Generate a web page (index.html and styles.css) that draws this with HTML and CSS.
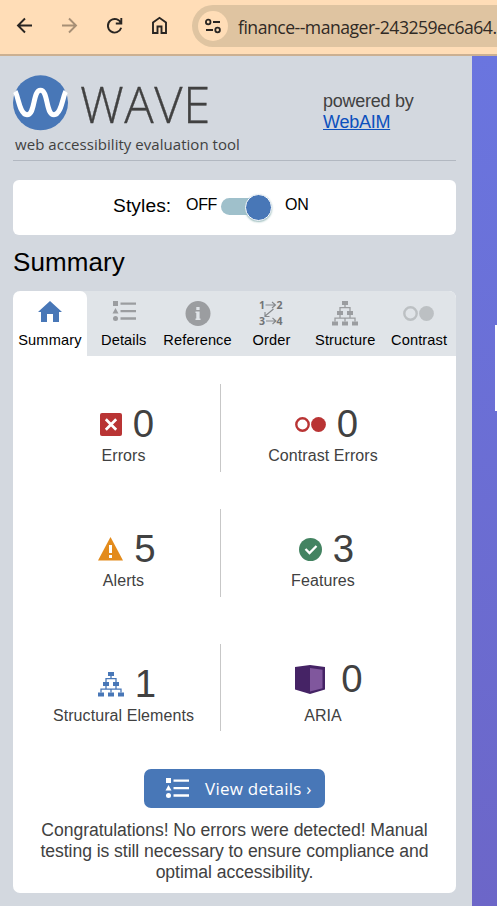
FILE: index.html
```html
<!DOCTYPE html>
<html lang="en">
<head>
<meta charset="utf-8">
<title>WAVE web accessibility evaluation tool</title>
<link rel="stylesheet" href="styles.css">
</head>
<body>
<svg width="0" height="0" class="defs">
  <defs>
    <symbol id="list" viewBox="0 0 24 20">
      <path fill="currentColor" d="M1 0h5v5H1zM3.500 7l3 5.500h-6z"/>
      <circle fill="currentColor" cx="3.500" cy="17.500" r="2.500"/>
      <path stroke="currentColor" stroke-width="2.400" d="M8.500 2.600H24M8.500 10.100H24M8.500 17.500H24"/>
    </symbol>
    <symbol id="tree" viewBox="0 0 26 25">
      <path fill="currentColor" d="M10 0h6v4h-6zM5 10h6v4H5zM15 10h6v4h-6zM0 20.500h6v4H0zM10 20.500h6v4h-6zM20 20.500h6v4h-6z"/>
      <path fill="none" stroke="currentColor" stroke-width="1.300" d="M13 4v3M8 10V6.700h10V10M8 14v3M18 14v3M3 20.500v-3.300h20v3.300M13 17v3.500"/>
    </symbol>
    <symbol id="contrast" viewBox="0 0 31 15">
      <circle fill="none" stroke="currentColor" stroke-width="2.400" cx="7.500" cy="7.500" r="6.200"/>
      <circle fill="currentColor" cx="23.500" cy="7.500" r="7.400"/>
    </symbol>
  </defs>
</svg>
<header class="toolbar">
  <svg class="nav-icons" width="176" height="54" fill="none" stroke="#292522" stroke-width="1.900">
    <path d="M32 25.500H18M25 18.500l-7 7 7 7"/>
    <path stroke="#a78f75" d="M62 25.500h14M69 18.500l7 7-7 7"/>
    <path d="M121 23.200a6.800 6.800 0 1 0 .2 4.600M121.300 18v5.500h-5.500"/>
    <path d="M153 33V22.500l6.500-4.700 6.500 4.700V33h-4.500v-6.500h-4V33z"/>
  </svg>
  <div class="address">
    <span class="site-settings">
      <svg width="18" height="16" fill="none" stroke="#292522" stroke-width="1.800">
        <circle cx="4.200" cy="4" r="2.300"/><path d="M9 4h7M2 12h7"/><circle cx="13.600" cy="12" r="2.300"/>
      </svg>
    </span>
    <span class="url">finance--manager-243259ec6a64.</span>
  </div>
</header>
<div class="workspace">
  <main class="sidebar">
    <div class="brand">
      <div class="identity">
        <div class="logo">
          <svg width="56" height="56" viewBox="0 0 56 56">
            <circle cx="27.500" cy="27.800" r="27.500" fill="#4877b7"/>
            <path d="M2.200 16.500C5 20 6.500 39.800 14 39.800c8.500 0 5.500-24.500 13.500-24.500s5 24.500 13.500 24.500c7.500 0 9-19.800 11.800-23.300" fill="none" stroke="#fff" stroke-width="5"/>
          </svg>
          <span class="wordmark">WAVE</span>
        </div>
        <div class="tagline">web accessibility evaluation tool</div>
      </div>
      <div class="powered">powered by<br><a href="#">WebAIM</a></div>
    </div>
    <section class="styles-switch">
      <span class="styles-label">Styles:</span>
      <span class="off">OFF</span>
      <span class="track"><span class="knob"></span></span>
      <span class="on">ON</span>
    </section>
    <h1>Summary</h1>
    <section class="panel">
      <nav class="tabs">
        <div class="tab active"><svg width="24" height="21" viewBox="0 0 24 21"><path fill="#4877b7" d="M12 0l12 11h-3v10h-6v-8H9v8H3V11H0z"/></svg><span>Summary</span></div>
        <div class="tab"><svg class="gray" width="24" height="20"><use href="#list"/></svg><span>Details</span></div>
        <div class="tab"><svg width="26" height="25" viewBox="0 0 26 25"><circle cx="13" cy="12.500" r="12.500" fill="#9b9da0"/><path fill="#e0e4e8" d="M11.300 6h3.300v3h-3.300zM10.500 10.500h4.100V17.500H15.500V19h-5v-1.500h.8V12h-.8z"/></svg><span>Reference</span></div>
        <div class="tab"><svg class="order" width="26" height="26"><text x="1" y="9">1</text><text x="18.500" y="9">2</text><text x="1" y="25">3</text><text x="18.500" y="25">4</text><path d="M7.500 5h10M14 2l3.500 3-3.500 3M8 21h10M14.500 18l3.500 3-3.500 3M15.500 9l-9 7.500M7 12v4.500h4.500"/></svg><span>Order</span></div>
        <div class="tab"><svg class="gray" width="26" height="25"><use href="#tree"/></svg><span>Structure</span></div>
        <div class="tab"><svg class="pale contrast-tab" width="31" height="15"><use href="#contrast"/></svg><span>Contrast</span></div>
      </nav>
      <div class="counts">
        <div class="count left"><div class="figure"><svg width="22" height="23"><rect width="22" height="23" rx="2" fill="#b93434"/><path d="M5.800 6.200l10.400 10.600M16.200 6.200L5.800 16.800" stroke="#fff" stroke-width="2.700"/></svg><b>0</b></div><span>Errors</span></div>
        <div class="count"><div class="figure"><svg class="red" width="31" height="15"><use href="#contrast"/></svg><b>0</b></div><span>Contrast Errors</span></div>
        <div class="count left"><div class="figure"><svg width="25" height="24"><path fill="#e38b1c" d="M12.500 0L25 23.500H0z"/><path fill="#fff" d="M11 8h3v8h-3zM11 18h3v3h-3z"/></svg><b>5</b></div><span>Alerts</span></div>
        <div class="count"><div class="figure"><svg width="23" height="23"><circle cx="11.500" cy="11.500" r="11.500" fill="#438361"/><path d="M6.500 11l4 4 7-7" fill="none" stroke="#fff" stroke-width="2.300"/></svg><b>3</b></div><span>Features</span></div>
        <div class="count left"><div class="figure"><svg class="blue" width="26" height="25"><use href="#tree"/></svg><b>1</b></div><span>Structural Elements</span></div>
        <div class="count aria"><div class="figure"><svg width="30" height="29"><path fill="#452365" d="M0 2L15 0l15 2v22.500L15 29 0 24.500z"/><path fill="#80579d" d="M15 3l12.500 1.800v18.500L15 26.500z"/></svg><b>0</b></div><span>ARIA</span></div>
      </div>
      <button class="details"><svg width="24" height="20"><use href="#list"/></svg><span>View details ›</span></button>
      <p>Congratulations! No errors were detected! Manual<br>testing is still necessary to ensure compliance and<br>optimal accessibility.</p>
    </section>
  </main>
  <aside class="page"><div class="page-card"></div></aside>
</div>
</body>
</html>
```

FILE: styles.css
```css
* { box-sizing: border-box; }
body { margin: 0; width: 497px; height: 906px; overflow: hidden; background: #d3d8df; color: #414141; font-family: "Liberation Sans", Arial, sans-serif; }
svg { display: block; flex: none; }
.defs { position: absolute; }
.toolbar { height: 56px; background: #ffddb7; border-bottom: 2px solid #cbb092; display: flex; overflow: hidden; }
.nav-icons { margin-right: 16px; }
.address { flex: none; width: 305px; height: 42px; margin-top: 5px; padding-left: 6px; border-radius: 21px 0 0 21px; background: #dfc4a1; display: flex; align-items: center; }
.site-settings { flex: none; width: 30px; height: 30px; border-radius: 50%; background: #ffddb7; display: flex; align-items: center; justify-content: center; }
.url { margin: 1px 0 0 10px; color: #302a25; font: 17.600px "Open Sans", sans-serif; letter-spacing: -.5px; white-space: nowrap; }
.workspace { display: flex; height: 850px; }
.sidebar { width: 472px; padding: 0 16px 0 13px; }
.brand { height: 105px; border-bottom: 1px solid #b2b8c1; display: flex; }
.identity { width: 310px; padding-top: 19px; }
.logo { display: flex; height: 56px; }
.wordmark { margin-left: 11px; font: 300 49px/59px "Open Sans", sans-serif; letter-spacing: .6px; -webkit-text-stroke: .3px #414141; white-space: nowrap; }
.tagline { margin: 4px 0 0 2px; font: 15px/19px "Open Sans", sans-serif; letter-spacing: .04px; white-space: nowrap; }
.powered { padding-top: 35px; font-size: 18px; line-height: 21px; letter-spacing: -.25px; }
.powered a { color: #0c50bd; }
.styles-switch { width: 443px; height: 55px; margin-top: 19px; padding: 14px 0 0 100px; border-radius: 6px; background: #fff; color: #000; display: flex; }
.styles-label { width: 73px; font-size: 19.2px; line-height: 24px; letter-spacing: .1px; }
.off { width: 35px; line-height: 22px; letter-spacing: -.3px; }
.track { width: 50px; height: 17px; margin-top: 4px; border-radius: 9px; background: #9fc0cb; position: relative; }
.knob { position: absolute; right: -1px; top: -4px; width: 27px; height: 27px; border: 1px solid #fff; border-radius: 50%; background: #4877b7; box-shadow: 0 1px 2px #9bb; }
.on { margin-left: 14px; line-height: 22px; letter-spacing: -.3px; }
h1 { height: 56px; margin: 0; padding-top: 12px; color: #000; font-size: 26px; line-height: 30px; font-weight: 400; letter-spacing: .1px; }
.panel { width: 443px; height: 602px; overflow: hidden; border-radius: 7px; background: #fff; }
.tabs { height: 65px; display: grid; grid-template-columns: repeat(6, 1fr); background: #e0e4e8; color: #000; font-size: 14.600px; letter-spacing: .12px; }
.tab { height: 65px; padding-top: 10px; display: flex; flex-direction: column; align-items: center; justify-content: space-between; }
.tab span { height: 25px; line-height: 18px; }
.active { background: #fff; border-radius: 7px 7px 0 0; }
.gray { color: #9b9da0; }
.pale { color: #bcc0c3; }
.contrast-tab { margin: 5px 1px 0 0; }
.order { overflow: visible; margin-top: -1px; fill: #727476; stroke: none; font: bold 10.500px "Open Sans", sans-serif; letter-spacing: 0; }
.order path { fill: none; stroke: #85888b; stroke-width: 1.100; }
.counts { height: 375px; margin: 28px 31px 0 14px; display: grid; grid-template-columns: 194px 204px; grid-template-rows: 88px 88px 88px; row-gap: 37px; }
.count { height: 88px; padding-top: 18px; text-align: center; }
.left { border-right: 1px solid #c7c7c7; }
.count > span { display: block; margin-top: 1px; line-height: 22px; letter-spacing: .08px; }
.figure { height: 42px; padding-left: 7px; display: flex; align-items: center; justify-content: center; gap: 11px; }
.figure b { padding-top: 2px; font-size: 38.400px; line-height: 42px; font-weight: 400; }
.figure svg { margin-top: 2px; }
.red { color: #b93434; }
.blue { color: #4877b7; }
.count:nth-child(n+5) { height: 87px; margin-top: 10px; }
.aria { padding-top: 13px; }
.aria .figure { padding-left: 12px; gap: 16px; }
.aria > span { margin-top: 6px; }
.details { width: 181px; height: 39px; margin: 10px 0 0 131px; padding: 0 0 0 21px; border: 0; border-radius: 7px; background: #4877b7; color: #fff; display: flex; align-items: center; gap: 16px; font: 17px "Open Sans", sans-serif; letter-spacing: .25px; white-space: nowrap; }
.details svg { margin-top: -2px; }
.details span { margin-top: -1px; }
.panel p { margin: 12px 0 0; text-align: center; font-size: 17.600px; line-height: 21px; letter-spacing: -.06px; white-space: nowrap; }
.page { width: 25px; background: linear-gradient(#6a75df, #6c66c8); padding-top: 269px; }
.page-card { width: 2px; height: 86px; margin-left: auto; background: #fff; }
```
